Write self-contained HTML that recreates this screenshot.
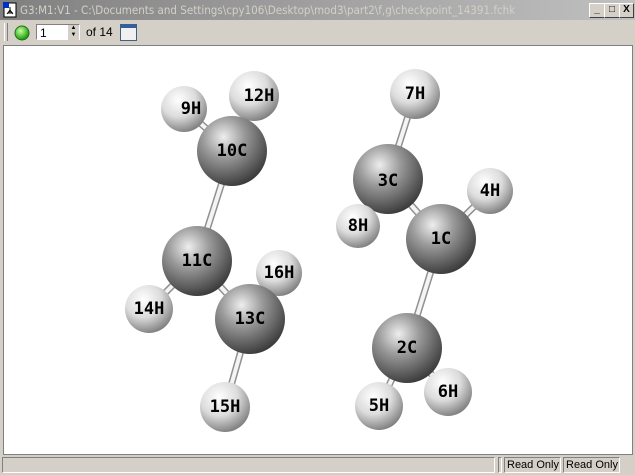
<!DOCTYPE html>
<html><head><style>
body{margin:0;width:635px;height:475px;background:#d4d0c8;font-family:"Liberation Sans",sans-serif;overflow:hidden;position:relative}
#title{position:absolute;left:0;top:0;width:635px;height:20px;background:linear-gradient(90deg,#808080,#c0c0c0);color:#d4d0c8;font-size:12px;line-height:20px}
#title span{position:absolute;left:20px;top:0;font-family:"DejaVu Sans Condensed","Liberation Sans",sans-serif;font-size:11.5px;white-space:nowrap}
.btn{position:absolute;top:3px;width:14px;height:13px;background:#d4d0c8;border:1px solid;border-color:#fff #404040 #404040 #fff;font-size:10px;line-height:12px;text-align:center;color:#000;font-weight:bold}
#tb{position:absolute;top:21px;left:0;width:635px;height:23px}
#canvas{position:absolute;left:3px;top:45px;width:628px;height:408px;background:#fff;border:1px solid #808080}
#status{position:absolute;top:455px;left:0;width:635px;height:20px;font-size:11px}
.pane{position:absolute;top:2px;height:16px;border:1px solid;border-color:#808080 #fff #fff #808080;line-height:15px;padding-left:2px;white-space:nowrap;overflow:hidden;box-sizing:border-box}
</style></head><body>
<div id="title">
<svg style="position:absolute;left:3px;top:2px" width="16" height="16"><rect x="1" y="1" width="12" height="14" fill="#fff" stroke="#000"/><rect x="0" y="0" width="6" height="6" fill="#0030c0"/><path d="M7 5v6M5 11h5M7 8l-3 4M7 8l3 4" stroke="#000"/></svg>
<span>G3:M1:V1 - C:\Documents and Settings\cpy106\Desktop\mod3\part2\f,g\checkpoint_14391.fchk</span>
<div class="btn" style="left:589px">_</div><div class="btn" style="left:604px">□</div><div class="btn" style="left:619px;width:13px">X</div>
</div>
<div id="tb">
<div style="position:absolute;left:4px;top:2px;width:2px;height:18px;border-left:1px solid #fff;border-right:1px solid #808080"></div>
<svg style="position:absolute;left:14px;top:4px" width="16" height="16"><defs><radialGradient id="gg" cx="0.4" cy="0.35" r="0.6"><stop offset="0" stop-color="#c8ffa0"/><stop offset="1" stop-color="#20a010"/></radialGradient></defs><circle cx="8" cy="8" r="7" fill="url(#gg)" stroke="#207010"/></svg>
<div style="position:absolute;left:36px;top:3px;width:44px;height:16px;background:#fff;border:1px solid;border-color:#808080 #fff #fff #808080;font-size:12px;line-height:16px;padding-left:3px;box-sizing:border-box">1</div>
<div style="position:absolute;left:68px;top:4px;width:11px;height:15px;background:#d4d0c8;font-size:6px;text-align:center;line-height:7px">▲<br>▼</div>
<div style="position:absolute;left:86px;top:3px;font-size:12px;line-height:17px">of 14</div>
<div style="position:absolute;left:120px;top:3px;width:15px;height:15px;background:#f0f0f0;border:1px solid #406080"><div style="height:3px;background:#3060a0"></div></div>
</div>
<div id="canvas">
<svg width="628" height="408" style="position:absolute;left:-3px;top:-45px;overflow:visible">
<defs>
<radialGradient id="c" cx="0.38" cy="0.3" r="0.75"><stop offset="0" stop-color="#eeeeee"/><stop offset="0.4" stop-color="#999999"/><stop offset="1" stop-color="#353535"/></radialGradient>
<radialGradient id="h" cx="0.38" cy="0.3" r="0.75"><stop offset="0" stop-color="#ffffff"/><stop offset="0.5" stop-color="#dcdcdc"/><stop offset="1" stop-color="#787878"/></radialGradient>
</defs>
<g stroke="#909090" stroke-width="7" stroke-linecap="butt">
<line x1="231" y1="150" x2="196" y2="260"/><line x1="196" y1="260" x2="249" y2="318"/><line x1="196" y1="260" x2="148" y2="308"/><line x1="249" y1="318" x2="278" y2="272"/><line x1="249" y1="318" x2="224" y2="406"/><line x1="231" y1="150" x2="183" y2="108"/><line x1="231" y1="150" x2="253" y2="95"/>
<line x1="387" y1="178" x2="414" y2="93"/><line x1="387" y1="178" x2="357" y2="225"/><line x1="387" y1="178" x2="440" y2="238"/><line x1="440" y1="238" x2="489" y2="190"/><line x1="440" y1="238" x2="406" y2="347"/><line x1="406" y1="347" x2="378" y2="405"/><line x1="406" y1="347" x2="447" y2="391"/>
</g>
<g stroke="#f4f4f4" stroke-width="4">
<line x1="231" y1="150" x2="196" y2="260"/><line x1="196" y1="260" x2="249" y2="318"/><line x1="196" y1="260" x2="148" y2="308"/><line x1="249" y1="318" x2="278" y2="272"/><line x1="249" y1="318" x2="224" y2="406"/><line x1="231" y1="150" x2="183" y2="108"/><line x1="231" y1="150" x2="253" y2="95"/>
<line x1="387" y1="178" x2="414" y2="93"/><line x1="387" y1="178" x2="357" y2="225"/><line x1="387" y1="178" x2="440" y2="238"/><line x1="440" y1="238" x2="489" y2="190"/><line x1="440" y1="238" x2="406" y2="347"/><line x1="406" y1="347" x2="378" y2="405"/><line x1="406" y1="347" x2="447" y2="391"/>
</g>
<g>
<circle cx="183" cy="108" r="23" fill="url(#h)"/><circle cx="253" cy="95" r="25" fill="url(#h)"/><circle cx="231" cy="150" r="35" fill="url(#c)"/>
<circle cx="414" cy="93" r="25" fill="url(#h)"/><circle cx="387" cy="178" r="35" fill="url(#c)"/><circle cx="357" cy="225" r="22" fill="url(#h)"/>
<circle cx="489" cy="190" r="23" fill="url(#h)"/><circle cx="440" cy="238" r="35" fill="url(#c)"/>
<circle cx="196" cy="260" r="35" fill="url(#c)"/><circle cx="148" cy="308" r="24" fill="url(#h)"/><circle cx="278" cy="272" r="23" fill="url(#h)"/><circle cx="249" cy="318" r="35" fill="url(#c)"/>
<circle cx="224" cy="406" r="25" fill="url(#h)"/>
<circle cx="406" cy="347" r="35" fill="url(#c)"/><circle cx="378" cy="405" r="24" fill="url(#h)"/><circle cx="447" cy="391" r="24" fill="url(#h)"/>
</g>
<g font-family="DejaVu Sans Mono,monospace" font-weight="bold" font-size="17" fill="#000" text-anchor="middle" dominant-baseline="central">
<text x="190" y="108">9H</text><text x="258" y="95">12H</text><text x="231" y="150">10C</text>
<text x="414" y="93">7H</text><text x="387" y="180">3C</text><text x="357" y="225">8H</text>
<text x="489" y="190">4H</text><text x="440" y="238">1C</text>
<text x="196" y="260">11C</text><text x="148" y="308">14H</text><text x="278" y="272">16H</text><text x="249" y="318">13C</text>
<text x="224" y="406">15H</text><text x="406" y="347">2C</text><text x="378" y="405">5H</text><text x="447" y="391">6H</text>
</g>
</svg>
</div>
<div id="status">
<div class="pane" style="left:2px;width:493px"></div>
<div class="pane" style="left:498px;width:4px;padding:0"></div>
<div class="pane" style="left:504px;width:57px">Read Only</div>
<div class="pane" style="left:563px;width:57px">Read Only</div>
</div>
</body></html>
